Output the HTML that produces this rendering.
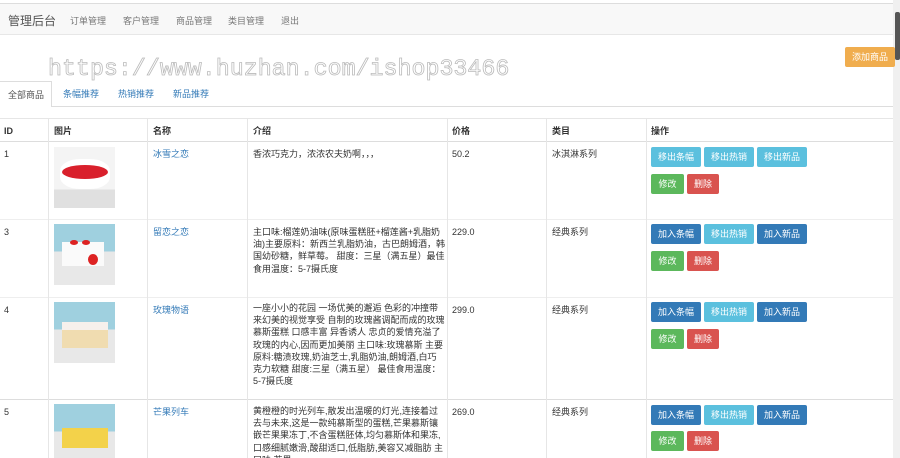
<!DOCTYPE html><html><head><meta charset="utf-8"><style>
*{box-sizing:border-box;margin:0;padding:0}
html,body{width:900px;height:458px;overflow:hidden}
body{background:#fff;font-family:"Liberation Sans","Noto Sans CJK SC",sans-serif;font-size:9px;color:#333;position:relative}
.a{position:absolute}
.nav{left:0;top:3px;width:893px;height:32px;background:#f8f8f8;border-top:1px solid #ddd;border-bottom:1px solid #e7e7e7}
.nav span{position:absolute;top:10px;color:#777;font-size:9px}
.wm{left:48px;top:56px;font-family:"Liberation Mono",monospace;font-size:23.3px;color:#fff;-webkit-text-stroke:0.8px #bbb}
.btn{position:absolute;height:20px;border-radius:2px;color:#fff;font-size:9px;text-align:center;line-height:20px}
.i{background:#5bc0de}.p{background:#337ab7}.s{background:#5cb85c}.d{background:#d9534f}
.vl{position:absolute;width:1px;background:#e6e6e6;top:118px;height:340px}
.hl{position:absolute;left:0;width:893px;height:1px;background:#ddd}
.img{position:absolute;left:54px;width:61px;height:61px;background:linear-gradient(#9fd0df 0 45%,#e8e8e8 45%);overflow:hidden}
.lnk{color:#337ab7}
.t{position:absolute;line-height:12px}
.desc{position:absolute;left:253px;width:192px;line-height:12.2px;font-size:9px}
</style></head><body>
<div class="a nav"><span style="left:8px;top:8px;font-size:12px;color:#555">管理后台</span><span style="left:70px">订单管理</span><span style="left:123px">客户管理</span><span style="left:176px">商品管理</span><span style="left:228px">类目管理</span><span style="left:281px">退出</span></div>
<div class="a" style="left:893px;top:0;width:7px;height:458px;background:#f0f0f0"></div>
<div class="a" style="left:895px;top:12px;width:5px;height:48px;background:#555;border-radius:2px"></div>
<div class="btn" style="left:845px;top:47px;width:50px;background:#f0ad4e">添加商品</div>
<div class="a wm">https://www.huzhan.com/ishop33466</div>
<div class="a" style="left:0;top:106px;width:893px;height:1px;background:#ddd"></div>
<div class="a" style="left:0;top:81px;width:52px;height:26px;background:#fff;border:1px solid #ddd;border-bottom:none;border-left:none"></div>
<span class="t" style="left:8px;top:89px;color:#555">全部商品</span>
<span class="t lnk" style="left:63px;top:88px">条幅推荐</span>
<span class="t lnk" style="left:118px;top:88px">热销推荐</span>
<span class="t lnk" style="left:173px;top:88px">新品推荐</span>
<div class="hl" style="top:118px;background:#e6e6e6"></div>
<div class="hl" style="top:141px"></div>
<div class="hl" style="top:219px;background:#eee"></div>
<div class="hl" style="top:297px;background:#eee"></div>
<div class="hl" style="top:399px"></div>
<div class="vl" style="left:48px"></div><div class="vl" style="left:147px"></div><div class="vl" style="left:247px"></div><div class="vl" style="left:447px"></div><div class="vl" style="left:546px"></div><div class="vl" style="left:646px"></div>
<b class="t" style="left:4px;top:125px">ID</b><b class="t" style="left:54px;top:125px">图片</b><b class="t" style="left:153px;top:125px">名称</b><b class="t" style="left:253px;top:125px">介绍</b><b class="t" style="left:452px;top:125px">价格</b><b class="t" style="left:552px;top:125px">类目</b><b class="t" style="left:651px;top:125px">操作</b>

<span class="t" style="left:4px;top:148px">1</span><div class="img" style="top:147px;background:linear-gradient(#f4f4f4 0 70%,#e0e0e0 70%)"><div class="a" style="left:6px;top:12px;width:50px;height:30px;background:#fff;border-radius:40%"></div><div class="a" style="left:8px;top:18px;width:46px;height:14px;background:#d9202c;border-radius:50%"></div></div>
<span class="t lnk" style="left:153px;top:148px">冰雪之恋</span><div class="desc" style="top:148px">香浓巧克力，浓浓农夫奶啊，，，</div>
<span class="t" style="left:452px;top:148px">50.2</span><span class="t" style="left:552px;top:148px">冰淇淋系列</span>
<div class="btn i" style="left:651px;top:147px;width:50px">移出条幅</div><div class="btn i" style="left:704px;top:147px;width:50px">移出热销</div><div class="btn i" style="left:757px;top:147px;width:50px">移出新品</div>
<div class="btn s" style="left:651px;top:174px;width:33px">修改</div><div class="btn d" style="left:687px;top:174px;width:32px">删除</div>

<span class="t" style="left:4px;top:226px">3</span><div class="img" style="top:224px"><div class="a" style="left:8px;top:18px;width:42px;height:24px;background:#fafafa"></div><div class="a" style="left:34px;top:30px;width:10px;height:11px;background:#d22;border-radius:50%"></div><div class="a" style="left:16px;top:16px;width:8px;height:5px;background:#d22;border-radius:50%"></div><div class="a" style="left:28px;top:16px;width:8px;height:5px;background:#d22;border-radius:50%"></div></div>
<span class="t lnk" style="left:153px;top:226px">留恋之恋</span><div class="desc" style="top:226px">主口味:榴莲奶油味(原味蛋糕胚+榴莲酱+乳脂奶油)主要原料：新西兰乳脂奶油，古巴朗姆酒，韩国幼砂糖，鲜草莓。 甜度：三星（满五星）最佳食用温度：5-7摄氏度</div>
<span class="t" style="left:452px;top:226px">229.0</span><span class="t" style="left:552px;top:226px">经典系列</span>
<div class="btn p" style="left:651px;top:224px;width:50px">加入条幅</div><div class="btn i" style="left:704px;top:224px;width:50px">移出热销</div><div class="btn p" style="left:757px;top:224px;width:50px">加入新品</div>
<div class="btn s" style="left:651px;top:251px;width:33px">修改</div><div class="btn d" style="left:687px;top:251px;width:32px">删除</div>

<span class="t" style="left:4px;top:304px">4</span><div class="img" style="top:302px"><div class="a" style="left:8px;top:22px;width:46px;height:24px;background:#f0dcb0"></div><div class="a" style="left:8px;top:20px;width:46px;height:8px;background:#f6f0ec"></div></div>
<span class="t lnk" style="left:153px;top:304px">玫瑰物语</span><div class="desc" style="top:302px">一座小小的花园 一场优美的邂逅 色彩的冲撞带来幻美的视觉享受 自制的玫瑰酱调配而成的玫瑰慕斯蛋糕 口感丰富 异香诱人 忠贞的爱情充溢了玫瑰的内心,因而更加美丽 主口味:玫瑰慕斯 主要原料:糖渍玫瑰,奶油芝士,乳脂奶油,朗姆酒,白巧克力软糖 甜度:三星（满五星） 最佳食用温度：5-7摄氏度</div>
<span class="t" style="left:452px;top:304px">299.0</span><span class="t" style="left:552px;top:304px">经典系列</span>
<div class="btn p" style="left:651px;top:302px;width:50px">加入条幅</div><div class="btn i" style="left:704px;top:302px;width:50px">移出热销</div><div class="btn p" style="left:757px;top:302px;width:50px">加入新品</div>
<div class="btn s" style="left:651px;top:329px;width:33px">修改</div><div class="btn d" style="left:687px;top:329px;width:32px">删除</div>

<span class="t" style="left:4px;top:406px">5</span><div class="img" style="top:404px"><div class="a" style="left:8px;top:24px;width:46px;height:20px;background:#f3d24a"></div></div>
<span class="t lnk" style="left:153px;top:406px">芒果列车</span><div class="desc" style="top:405px">黄橙橙的时光列车,散发出温暖的灯光,连接着过去与未来,这是一款纯慕斯型的蛋糕,芒果慕斯镶嵌芒果果冻丁,不含蛋糕胚体,均匀慕斯体和果冻,口感细腻嫩滑,酸甜适口,低脂肪,美容又减脂肪 主口味:芒果</div>
<span class="t" style="left:452px;top:406px">269.0</span><span class="t" style="left:552px;top:406px">经典系列</span>
<div class="btn p" style="left:651px;top:405px;width:50px">加入条幅</div><div class="btn i" style="left:704px;top:405px;width:50px">移出热销</div><div class="btn p" style="left:757px;top:405px;width:50px">加入新品</div>
<div class="btn s" style="left:651px;top:431px;width:33px">修改</div><div class="btn d" style="left:687px;top:431px;width:32px">删除</div>
</body></html>
